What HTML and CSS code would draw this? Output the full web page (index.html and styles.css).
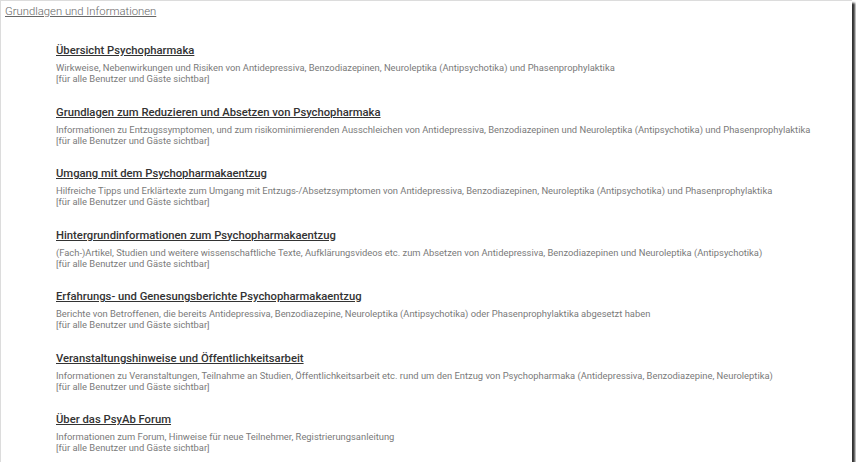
FILE: index.html
```html
<!DOCTYPE html>
<html lang="de">
<head>
<meta charset="utf-8">
<title>Grundlagen und Informationen</title>
<link rel="stylesheet" href="styles.css">
</head>
<body>
<div class="frame">
  <div class="crumb"><a href="#">Grundlagen und Informationen</a></div>
  <ul class="forums">
    <li class="forum">
      <a class="title" href="#">Übersicht Psychopharmaka</a>
      <div class="desc">Wirkweise, Nebenwirkungen und Risiken von Antidepressiva, Benzodiazepinen, Neuroleptika (Antipsychotika) und Phasenprophylaktika<br>[für alle Benutzer und Gäste sichtbar]</div>
    </li>
    <li class="forum">
      <a class="title" href="#">Grundlagen zum Reduzieren und Absetzen von Psychopharmaka</a>
      <div class="desc">Informationen zu Entzugssymptomen, und zum risikominimierenden Ausschleichen von Antidepressiva, Benzodiazepinen und Neuroleptika (Antipsychotika) und Phasenprophylaktika<br>[für alle Benutzer und Gäste sichtbar]</div>
    </li>
    <li class="forum">
      <a class="title" href="#">Umgang mit dem Psychopharmakaentzug</a>
      <div class="desc">Hilfreiche Tipps und Erklärtexte zum Umgang mit Entzugs-/Absetzsymptomen von Antidepressiva, Benzodiazepinen, Neuroleptika (Antipsychotika) und Phasenprophylaktika<br>[für alle Benutzer und Gäste sichtbar]</div>
    </li>
    <li class="forum">
      <a class="title" href="#">Hintergrundinformationen zum Psychopharmakaentzug</a>
      <div class="desc">(Fach-)Artikel, Studien und weitere wissenschaftliche Texte, Aufklärungsvideos etc. zum Absetzen von Antidepressiva, Benzodiazepinen und Neuroleptika (Antipsychotika)<br>[für alle Benutzer und Gäste sichtbar]</div>
    </li>
    <li class="forum">
      <a class="title" href="#">Erfahrungs- und Genesungsberichte Psychopharmakaentzug</a>
      <div class="desc">Berichte von Betroffenen, die bereits Antidepressiva, Benzodiazepine, Neuroleptika (Antipsychotika) oder Phasenprophylaktika abgesetzt haben<br>[für alle Benutzer und Gäste sichtbar]</div>
    </li>
    <li class="forum">
      <a class="title" href="#">Veranstaltungshinweise und Öffentlichkeitsarbeit</a>
      <div class="desc">Informationen zu Veranstaltungen, Teilnahme an Studien, Öffentlichkeitsarbeit etc. rund um den Entzug von Psychopharmaka (Antidepressiva, Benzodiazepine, Neuroleptika)<br>[für alle Benutzer und Gäste sichtbar]</div>
    </li>
    <li class="forum">
      <a class="title" href="#">Über das PsyAb Forum</a>
      <div class="desc">Informationen zum Forum, Hinweise für neue Teilnehmer, Registrierungsanleitung<br>[für alle Benutzer und Gäste sichtbar]</div>
    </li>
  </ul>
</div>
</body>
</html>
```

FILE: styles.css
```css
html, body {
  margin: 0;
  padding: 0;
  background: #fff;
}

body {
  font-family: Roboto, "Liberation Sans", sans-serif;
}

.frame {
  box-sizing: border-box;
  width: 852px;
  height: 462px;
  border-top: 1px solid #dcdcdc;
  border-left: 1px solid #dcdcdc;
  background: #fff;
  box-shadow: 3px 3px 2px rgba(0, 0, 0, 0.8);
  overflow: hidden;
}

.crumb {
  padding: 4px 0 0 4px;
  font-size: 11.3px;
  font-weight: 300;
  line-height: 14px;
}

.crumb a {
  color: #666;
  text-decoration: underline;
}

.forums {
  list-style: none;
  margin: 25px 0 0 0;
  padding: 0 0 0 55px;
  display: flex;
  flex-direction: column;
  gap: 21.5px;
}

.title {
  display: block;
  font-size: 11.25px;
  font-weight: 500;
  line-height: 14px;
  color: #333;
  text-decoration: underline;
}

.desc {
  margin-top: 4px;
  font-size: 9.4px;
  line-height: 11px;
  color: #7a7a7a;
}
```
